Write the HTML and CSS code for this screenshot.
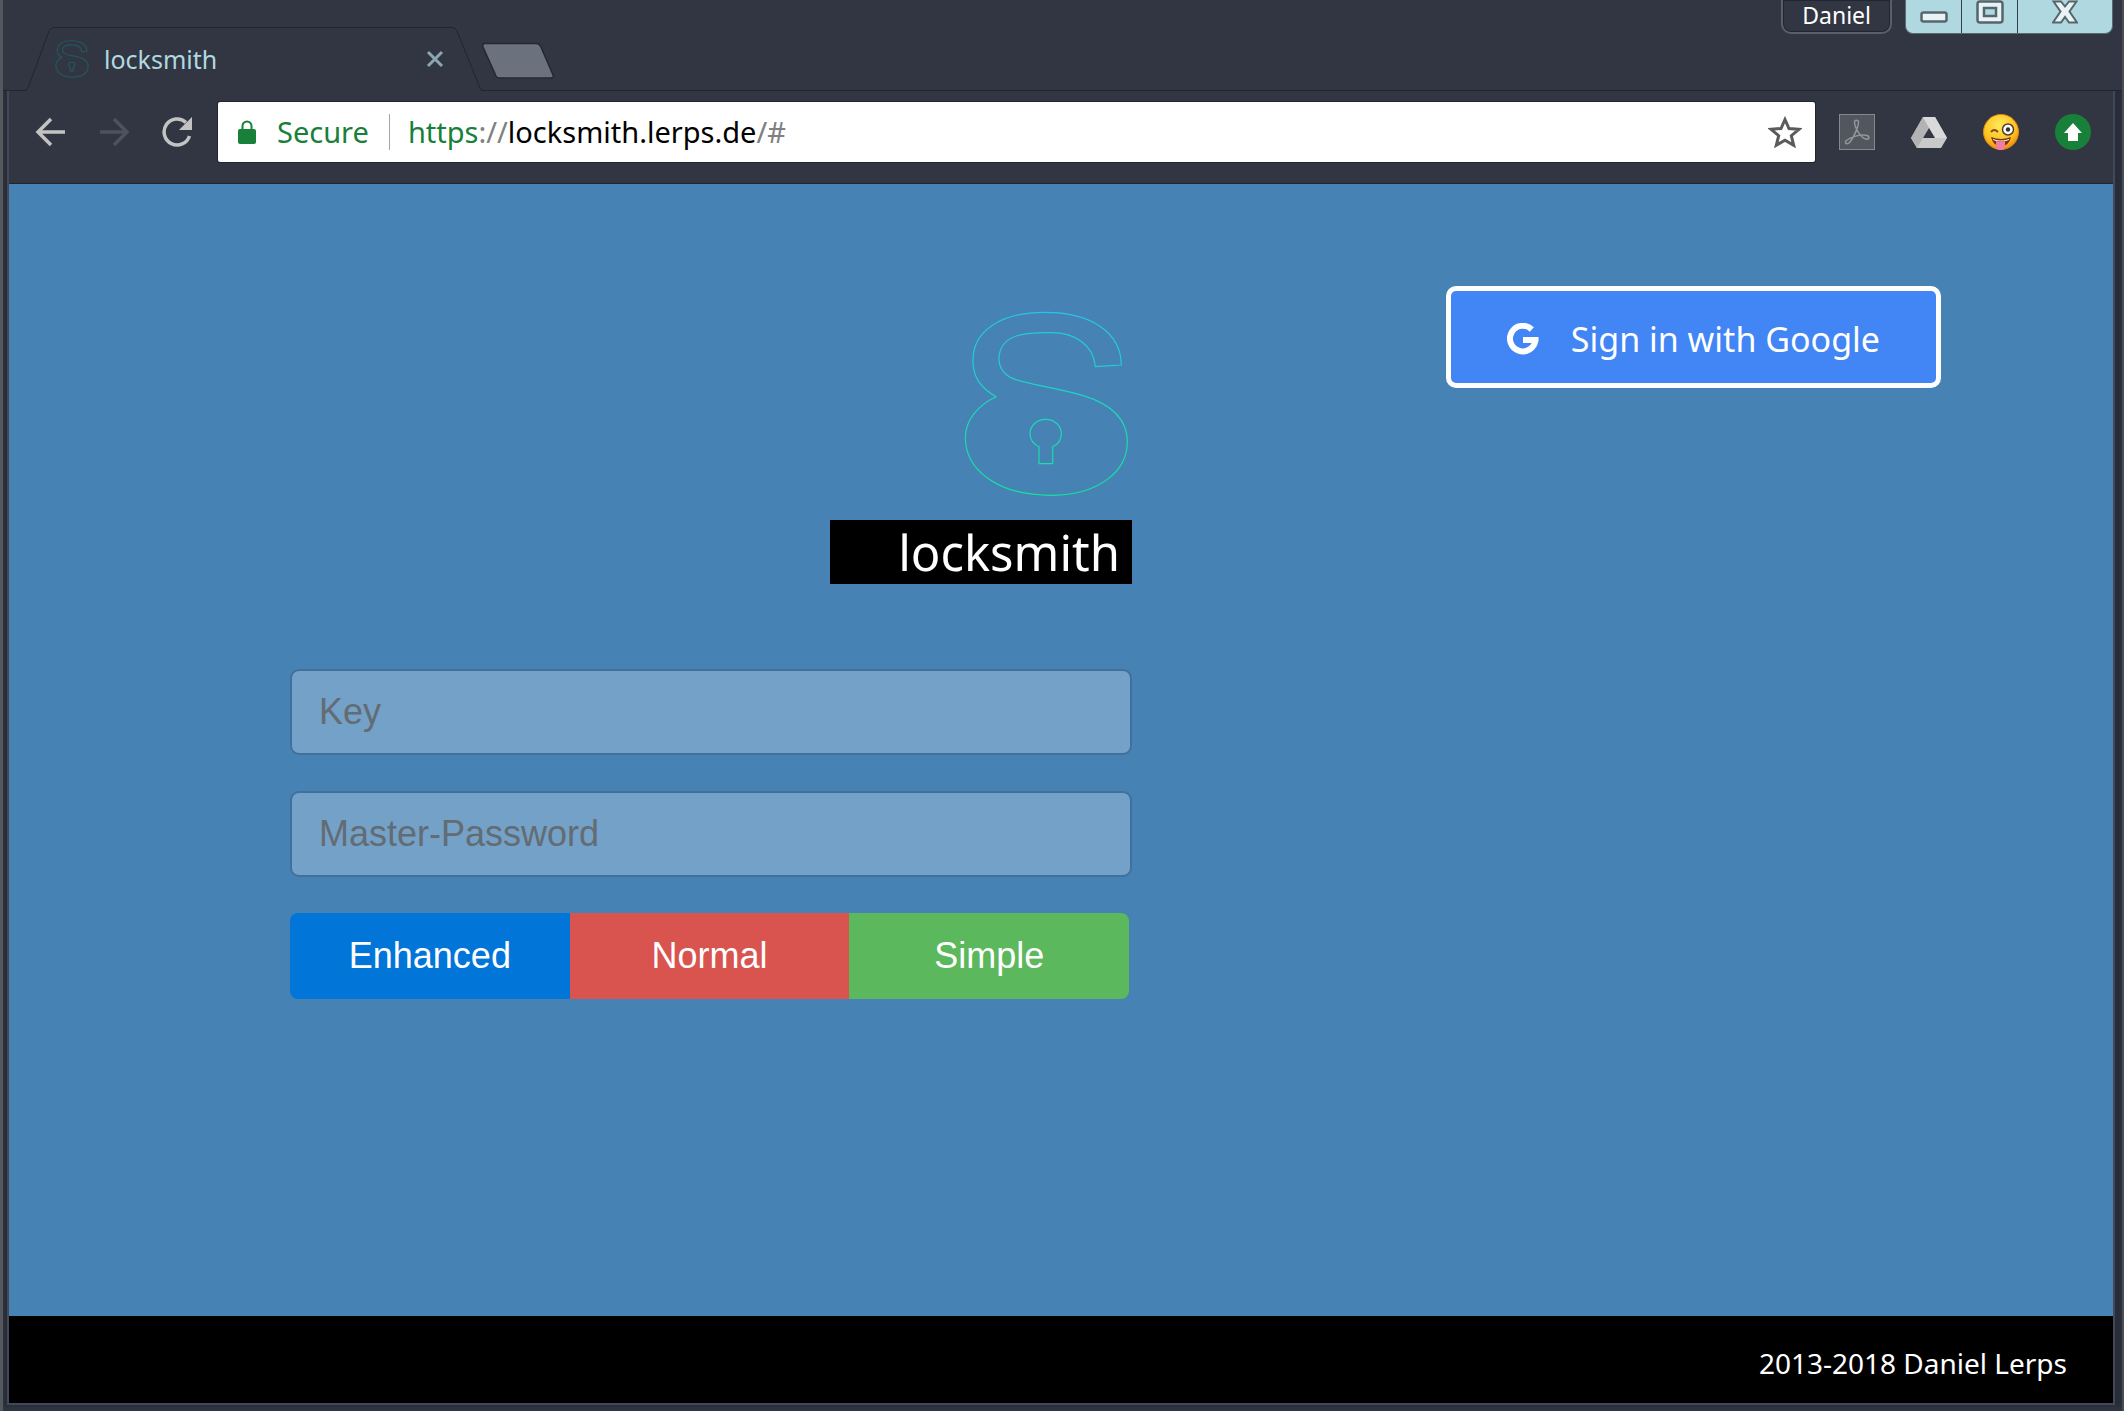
FILE: index.html
```html
<!DOCTYPE html>
<html lang="en">
<head>
    <meta charset="utf-8">
    <title>locksmith</title>
    <link rel="stylesheet" href="styles.css">
</head>
<body>
    <div class="window">
        <!-- Title bar with tabs and window buttons -->
        <header class="titlebar">
            <div class="tab">
                <svg class="tab-shape" viewBox="0 0 464 64" aria-hidden="true">
                    <path d="M0 63.5H2Q5 63.5 6 61L27 4Q29 .5 32 .5H430Q433 .5 435 4L458 61Q459 63.5 462 63.5H464" fill="#313642" stroke="#20262f"/>
                    <path d="M5 64H459" stroke="#313642" stroke-width="2"/>
                </svg>
                <svg class="tab-icon" viewBox="485 56 510 572" aria-hidden="true">
                    <path d="M885 230C880 170 830 127 735 129C640 127 597 155 597 207C597 255 630 270 700 285C770 298 870 312 910 340C960 365 983 410 982 460C982 550 890 616 750 616C590 616 497 535 496 443C497 390 530 345 588 320C540 290 519 260 519 210C519 120 600 66 735 67C870 66 965 125 963 225Z"/>
                    <path d="M717 521V470C697 460 690 448 690 431A47 43 0 0 1 784 431C784 448 776 462 758 470V521Z"/>
                </svg>
                <span class="tab-title">locksmith</span>
                <button class="tab-close" aria-label="Close tab">
                    <svg viewBox="0 0 18 18" width="18" height="18"><path d="M2 2L16 16M16 2L2 16" fill="none" stroke="#8aa6b0" stroke-width="3"/></svg>
                </button>
            </div>
            <button class="new-tab" aria-label="New tab">
                <svg viewBox="0 0 74 38" width="74" height="38"><path d="M4 1.500H55Q58 1.500 59.500 4L72 33Q73 36 70 36H19Q16 36 15 34L2 5Q1 1.500 4 1.500Z" fill="#6c727d" stroke="#232832" stroke-width="1.500"/></svg>
            </button>
            <button class="profile">Daniel</button>
            <div class="window-buttons">
                <button aria-label="Minimize">
                    <svg viewBox="0 0 28 12" width="28" height="12"><rect x="1.500" y="1.500" width="25" height="9" rx="2" fill="#e9f3f5" stroke="#55666c" stroke-width="2.500"/></svg>
                </button>
                <button aria-label="Maximize">
                    <svg viewBox="0 0 28 24" width="28" height="24"><path d="M4 1.500H24Q26.500 1.500 26.500 4V20Q26.500 22.500 24 22.500H4Q1.500 22.500 1.500 20V4Q1.500 1.500 4 1.500ZM8 8V16H20V8Z" fill="#e9f3f5" fill-rule="evenodd" stroke="#55666c" stroke-width="2.500"/></svg>
                </button>
                <button class="close" aria-label="Close">
                    <svg viewBox="0 0 26 24" width="26" height="24"><path d="M1.500 1.500H9L13 6.500L17 1.500H24.500L17.500 11.500L25 22.500H17L13 17L9 22.500H1L8.500 11.500Z" fill="#e9f3f5" stroke="#55666c" stroke-width="2"/></svg>
                </button>
            </div>
        </header>

        <div class="frame">
            <!-- Navigation and address bar -->
            <nav class="toolbar">
                <button class="nav-button" aria-label="Back">
                    <svg viewBox="0 0 32 32" width="32" height="32"><path d="M30 16H4M16 3L3 16L16 29" fill="none" stroke="#c3c3c4" stroke-width="3.500"/></svg>
                </button>
                <button class="nav-button" aria-label="Forward">
                    <svg viewBox="0 0 32 32" width="32" height="32"><path d="M2 16H28M16 3L29 16L16 29" fill="none" stroke="#4e525d" stroke-width="3.500"/></svg>
                </button>
                <button class="nav-button" aria-label="Reload">
                    <svg viewBox="0 0 32 32" width="32" height="32"><path d="M28.500 20A13 13 0 1 1 25 6.500" fill="none" stroke="#c3c3c4" stroke-width="3.500"/><path d="M31 1V14H18Z" fill="#c3c3c4"/></svg>
                </button>
                <div class="address">
                    <svg class="lock" viewBox="0 0 18 24" width="18" height="24"><path d="M2 9H16Q18 9 18 11V22Q18 24 16 24H2Q0 24 0 22V11Q0 9 2 9Z" fill="#188038"/><path d="M4.500 10V6A4.500 4.500 0 0 1 13.500 6V10" fill="none" stroke="#188038" stroke-width="2"/></svg>
                    <span class="secure">Secure</span>
                    <span class="url"><span class="scheme">https</span>://<span class="host">locksmith.lerps.de</span>/#</span>
                    <button class="star" aria-label="Bookmark this page">
                        <svg viewBox="0 0 34 32" width="34" height="32"><path d="M17 3.500L21 12.500L31 13.300L23.300 19.700L25.700 29.300L17 24.200L8.300 29.300L10.700 19.700L3 13.300L13 12.500Z" fill="none" stroke="#5b5b5b" stroke-width="3"/></svg>
                    </button>
                </div>
                <div class="extensions">
                    <button aria-label="Acrobat">
                        <svg viewBox="0 0 36 36" width="36" height="36"><rect x=".5" y=".5" width="35" height="35" fill="#52565f" stroke="#85888d"/><path d="M15.500 8C15.500 5.500 19.500 5.500 19.500 8C19.500 13 14 25 10 29C7 31.500 5 28 8 26C13 22.500 22 20 28 21.500C31 22.500 30 26 27 25C22 24 15.500 14 15.500 8Z" fill="none" stroke="#93969b" stroke-width="1.500"/></svg>
                    </button>
                    <button aria-label="Drive">
                        <svg viewBox="0 0 36 36" width="36" height="36"><path d="M12 3H24L36 24L30 34H6L0 24Z" fill="#c9c9c9"/><path d="M12 3L18 14L6 34L0 24Z" fill="#b3b3b3"/><path d="M12 3H24L36 24H24Z" fill="#d9d9d9"/><path d="M18 14L24 24H12Z" fill="#313642"/></svg>
                    </button>
                    <button aria-label="Emoji">
                        <svg viewBox="0 0 36 36" width="36" height="36">
                            <defs>
                                <radialGradient id="face" cx=".45" cy=".3" r=".7"><stop offset="0" stop-color="#ffe95a"/><stop offset=".7" stop-color="#fdc21d"/><stop offset="1" stop-color="#ee8b12"/></radialGradient>
                            </defs>
                            <circle cx="18" cy="18" r="17.500" fill="url(#face)" stroke="#e9870f"/>
                            <path d="M8 18Q11 14 15 18" fill="none" stroke="#8a4b12" stroke-width="2"/>
                            <circle cx="25" cy="15.500" r="5.500" fill="#fff" stroke="#55402c" stroke-width="1.500"/>
                            <circle cx="25" cy="15.500" r="2.200" fill="#333"/>
                            <path d="M8 23Q18 27 28 23Q26 32 18 32Q10 32 8 23Z" fill="#7c3311"/>
                            <path d="M10 25Q18 28 26 25V26Q18 29 10 26Z" fill="#fff"/>
                            <path d="M13 27Q18 29 22 27V32Q22 36 17.500 36Q13 36 13 32Z" fill="#f57ba5"/>
                        </svg>
                    </button>
                    <button aria-label="Update">
                        <svg viewBox="0 0 36 36" width="36" height="36"><circle cx="18" cy="18" r="18" fill="#188038"/><path d="M18 9L27 19H23V27H13V19H9Z" fill="#fff"/></svg>
                    </button>
                </div>
            </nav>

            <main class="page">
                <form class="generator" onsubmit="return false">
                    <svg class="logo" viewBox="492 63 495 558" width="165" height="186" role="img" aria-label="Logo">
                        <defs>
                            <linearGradient id="line" gradientUnits="userSpaceOnUse" x1="0" y1="66" x2="0" y2="618"><stop offset="0" stop-color="#27c6e4"/><stop offset="1" stop-color="#12e69a"/></linearGradient>
                        </defs>
                        <g fill="none" stroke="url(#line)" stroke-width="3.500">
                            <path d="M886 230C880 165 825 128 755 128C690 127 597 127 597 207C597 235 615 258 645 268C690 284 770 294 850 317C940 345 982 390 982 455C982 545 895 615 755 616C585 616 497 535 496 443C496 390 535 345 588 320C540 292 518 260 519 210C519 125 600 67 735 67C870 67 963 125 964 225Z"/>
                            <path d="M717 521V470C697 460 690 448 690 431A47 43 0 0 1 784 431C784 448 776 462 758 470V521Z"/>
                        </g>
                    </svg>
                    <h1 class="brand">locksmith</h1>
                    <input class="field" type="text" aria-label="Key" placeholder="Key">
                    <input class="field" type="password" aria-label="Master-Password" placeholder="Master-Password">
                    <div class="modes">
                        <button class="enhanced">Enhanced</button>
                        <button class="normal">Normal</button>
                        <button class="simple">Simple</button>
                    </div>
                </form>
                <button class="google">
                    <svg viewBox="0 0 32 32" width="32" height="32"><path d="M24.800 6.500A12.800 12.800 0 1 0 28.500 17" fill="none" stroke="#fff" stroke-width="6"/><path d="M16 14H31.500V18L28 20H16Z" fill="#fff"/></svg>
                    Sign in with Google
                </button>
            </main>

            <footer class="footer">2013-2018 Daniel Lerps</footer>
        </div>
    </div>
</body>
</html>
```

FILE: styles.css
```css
* {
    box-sizing: border-box;
}

body {
    margin: 0;
    font-family: "Noto Sans", "Open Sans", sans-serif;
    background-color: #313642;
}

button {
    border: none;
    padding: 0;
    background: none;
    font-family: inherit;
    cursor: pointer;
}

svg {
    display: block;
    flex: none;
}

.window {
    display: flex;
    flex-direction: column;
    min-height: 100vh;
    padding: 0 7px 6px 4px;
    border-left: 3px solid #54575d;
    border-right: 2px solid #4a4d54;
    background-color: #282d38;
    box-shadow: inset 0 -4px 4px #303743;
}

/* Title bar */
.titlebar {
    display: flex;
    align-items: flex-end;
    height: 91px;
    margin: 0 -7px 0 -4px;
    padding: 0 9px 0 3px;
    background-color: #313642;
    border-bottom: 1px solid #20262f;
}

.tab {
    position: relative;
    display: flex;
    align-items: center;
    width: 464px;
    height: 64px;
    margin: 0 0 -1px 16px;
    padding: 0 42px 0 33px;
}

.tab-shape {
    position: absolute;
    top: 0;
    left: 0;
    width: 100%;
    height: 100%;
}

.tab-icon {
    position: relative;
    width: 34px;
    height: 38px;
    fill: none;
    stroke: #24575c;
    stroke-width: 18;
}

.tab-title {
    position: relative;
    flex: 1;
    margin-left: 15px;
    font-size: 25px;
    line-height: 32px;
    color: #b0d8e0;
}

.tab-close {
    position: relative;
}

.new-tab {
    margin-bottom: 10px;
    margin-left: -5px;
}

.profile {
    align-self: flex-start;
    height: 34px;
    margin-left: auto;
    padding: 0 19px 2px;
    border: 2px solid #5a5e68;
    border-top: none;
    border-radius: 0 0 10px 10px;
    box-shadow: inset 0 0 0 1px #20262f;
    font-size: 23px;
    line-height: 30px;
    color: #fff;
}

.window-buttons {
    display: flex;
    align-self: flex-start;
    height: 34px;
    margin-left: 13px;
    border: 1px solid #5a6a74;
    border-top: none;
    border-radius: 0 0 8px 8px;
    background-color: #b0d8e0;
}

.window-buttons button {
    display: flex;
    align-items: center;
    justify-content: center;
    width: 56px;
    height: 33px;
    padding-bottom: 9px;
    border-right: 1px solid #2c4049;
}

.window-buttons button:first-child {
    padding-bottom: 0;
}

.window-buttons .close {
    width: 94px;
    border-right: none;
}

.frame {
    display: flex;
    flex: 1;
    flex-direction: column;
    border: 2px solid #434859;
    border-top: none;
}

/* Toolbar */
.toolbar {
    display: flex;
    align-items: center;
    height: 93px;
    padding: 0 22px 11px 26px;
    border-bottom: 1px solid #20262f;
    background-color: #313642;
}

.nav-button {
    margin-right: 31px;
}

.address {
    display: flex;
    flex: 1;
    align-items: center;
    height: 60px;
    margin-right: 24px;
    padding: 0 13px 0 20px;
    border-radius: 2px;
    background-color: #fff;
    font-size: 29px;
    box-shadow: 0 0 0 1px #20262f;
    margin-left: -6px;
}

.secure {
    margin-left: 21px;
    padding-right: 20px;
    border-right: 1px solid #a5a5a5;
    line-height: 36px;
    color: #188038;
}

.url {
    margin-left: 18px;
    line-height: 36px;
    color: #808080;
}

.scheme {
    color: #188038;
}

.host {
    color: #000;
}

.star {
    margin-left: auto;
}

.extensions {
    display: flex;
    gap: 36px;
}

/* Page */
.page {
    display: flex;
    flex: 1;
    align-items: flex-start;
    justify-content: space-between;
    padding: 102px 172px 102px 281px;
    background-color: #4682b4;
}

.generator {
    display: flex;
    flex-direction: column;
    width: 51%;
    padding-top: 25px;
}

.logo {
    align-self: flex-end;
    margin-right: 3px;
}

.brand {
    align-self: flex-end;
    width: 302px;
    margin: 23px 0 85px;
    padding-right: 12px;
    background-color: #000;
    font-size: 49px;
    font-weight: normal;
    line-height: 64px;
    text-align: right;
    color: #fff;
}

.field {
    width: 100%;
    height: 86px;
    margin-bottom: 36px;
    padding: 0 27px;
    border: 2px solid #3f719c;
    border-radius: 9px;
    background-color: #74a1c8;
    font-family: "Liberation Sans", Arial, sans-serif;
    font-size: 36px;
    color: #333;
}

.field::placeholder {
    color: #636c72;
}

.modes {
    display: flex;
    margin-right: 3px;
    border-radius: 8px;
    overflow: hidden;
}

.modes button {
    flex: 1;
    height: 86px;
    font-family: "Liberation Sans", Arial, sans-serif;
    font-size: 36px;
    color: #fff;
}

.enhanced {
    background-color: #0275d8;
}

.normal {
    background-color: #d9534f;
}

.simple {
    background-color: #5cb85c;
}

.google {
    display: flex;
    align-items: center;
    gap: 32px;
    height: 102px;
    padding: 4px 56px 0;
    border: 5px solid #fff;
    border-radius: 10px;
    background-color: #4285f4;
    font-size: 34px;
    color: #fff;
}

.footer {
    padding: 27px 46px 20px;
    background-color: #000;
    font-size: 28px;
    line-height: 40px;
    text-align: right;
    color: #fff;
}
```
